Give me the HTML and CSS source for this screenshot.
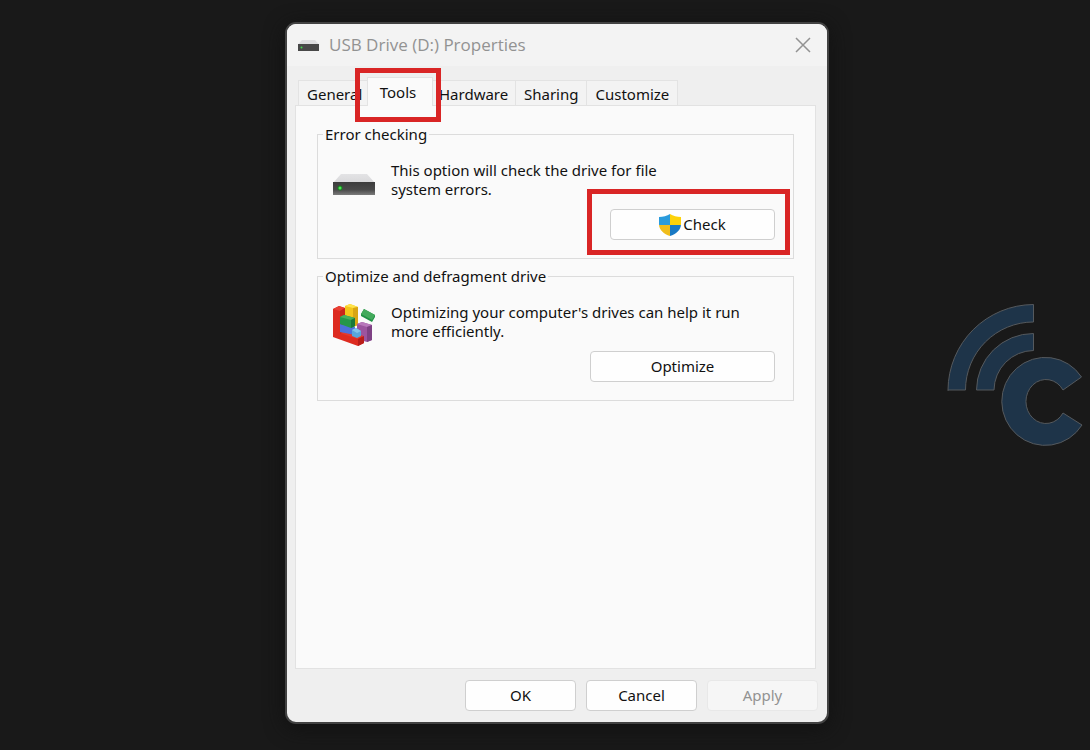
FILE: index.html
```html
<!DOCTYPE html>
<html lang="en">
<head>
    <meta charset="UTF-8">
    <meta name="viewport" content="width=device-width, initial-scale=1.0">
    <title>USB Drive (D:) Properties</title>
    <link rel="stylesheet" href="styles.css">
</head>
<body>
    <svg class="watermark" viewBox="0 0 136 142" aria-hidden="true">
        <path d="M1 86.500V86A86 86 0 0 1 86.500 .5V18A68 68 0 0 0 18.500 86H1Z"/>
        <path d="M29.500 86A57 57 0 0 1 86.500 29.500V46.500A40 40 0 0 0 47 86Z"/>
        <path d="M134.500 73A43.500 44 0 1 0 135 121L116 109A20 22 0 1 1 116 86Z"/>
    </svg>
    <main class="dialog">
        <header class="titlebar">
            <svg class="title-icon" viewBox="0 0 42 22">
                <path d="M8 0H34L42 9H0Z" fill="#dedee0"/>
                <rect y="8" width="42" height="14" fill="#484848"/>
                <circle cx="7" cy="15" r="2" fill="#3fd64a"/>
            </svg>
            <h1>USB Drive (D:) Properties</h1>
            <button class="close" aria-label="Close">
                <svg viewBox="0 0 16 16"><path d="M1 1L15 15M15 1L1 15"/></svg>
            </button>
        </header>

        <div class="tabs" role="tablist">
            <button class="tab general" role="tab">General</button>
            <div class="marked-tab">
                <button class="tab active" role="tab" aria-selected="true">Tools</button>
                <div class="highlight highlight-tab"></div>
            </div>
            <button class="tab hardware" role="tab">Hardware</button>
            <button class="tab" role="tab">Sharing</button>
            <button class="tab" role="tab">Customize</button>
        </div>

        <section class="panel" role="tabpanel">
            <fieldset>
                <legend>Error checking</legend>
                <div class="info">
                    <svg class="info-icon" viewBox="0 0 42 42">
                        <defs>
                            <linearGradient id="front" x1="0" y1="0" x2="0" y2="1">
                                <stop offset="0" stop-color="#3c3c3c"/>
                                <stop offset=".6" stop-color="#4a4a4a"/>
                                <stop offset="1" stop-color="#7b7b7b"/>
                            </linearGradient>
                            <linearGradient id="lid" x1="0" y1="0" x2="0" y2="1">
                                <stop offset="0" stop-color="#e3e3e5"/>
                                <stop offset="1" stop-color="#d8d8da"/>
                            </linearGradient>
                        </defs>
                        <path d="M8 12H34L42 21H0Z" fill="url(#lid)"/>
                        <rect y="20" width="42" height="13" fill="url(#front)"/>
                        <circle cx="7" cy="26" r="2.500" fill="#197f22"/>
                        <circle cx="7" cy="26" r="1.500" fill="#4be653"/>
                    </svg>
                    <p>This option will check the drive for file<br>system errors.</p>
                </div>
                <div class="action">
                    <button class="btn check">
                        <svg class="shield" viewBox="0 0 22 22">
                            <defs>
                                <clipPath id="shield"><path d="M11 0C8 2 4 3 0 3V10C0 16 5 20 11 22C17 20 22 16 22 10V3C18 3 14 2 11 0Z"/></clipPath>
                            </defs>
                            <g clip-path="url(#shield)">
                                <rect width="11" height="11" fill="#2a9bdc"/>
                                <rect x="11" width="11" height="11" fill="#fdd20a"/>
                                <rect y="11" width="11" height="11" fill="#f0bd1b"/>
                                <rect x="11" y="11" width="11" height="11" fill="#1979c4"/>
                            </g>
                        </svg>
                        Check
                    </button>
                    <div class="highlight highlight-check"></div>
                </div>
            </fieldset>

            <fieldset>
                <legend>Optimize and defragment drive</legend>
                <div class="info">
                    <svg class="info-icon" viewBox="0 0 42 42">
                        <path d="M12 2L17 0L25 3V21L20 23L12 20Z" fill="#f3c51b"/>
                        <path d="M12 2L17 0L25 3L20 4Z" fill="#ffe34a"/>
                        <path d="M20 4L25 3V21L20 23Z" fill="#d8a513"/>
                        <path d="M24 20L29 18L39 21V36L34 38L24 35Z" fill="#9c549f"/>
                        <path d="M24 20L29 18L39 21L34 23Z" fill="#b878bb"/>
                        <path d="M34 23L39 21V36L34 38Z" fill="#7e4184"/>
                        <path d="M0 5L6 2L12 4V28L31 34V39L25 42L0 33Z" fill="#dd2b20"/>
                        <path d="M0 5L6 2L12 4L7 7Z" fill="#e84034"/>
                        <path d="M7 7L12 4V28L7 30Z" fill="#c9241c"/>
                        <path d="M7 29L12 27L31 32L25 35Z" fill="#e23a2d"/>
                        <path d="M25 35L31 32V39L25 42Z" fill="#b91d19"/>
                        <path d="M7 20L22 23V31L7 28Z" fill="#4c71db"/>
                        <path d="M7 13L11 11L22 14V22L18 24L7 20Z" fill="#25974a"/>
                        <path d="M7 13L11 11L22 14L18 16Z" fill="#48b05c"/>
                        <path d="M18 16L22 14V22L18 24Z" fill="#197839"/>
                        <path d="M19 26L23 24L28 27V32L24 34L19 32Z" fill="#58a6dc"/>
                        <path d="M19 26L23 24L28 27L24 29Z" fill="#82c3ec"/>
                        <path d="M28 10L31 5L42 11V13L39 18L28 12Z" fill="#219246"/>
                        <path d="M28 10L31 5L42 11L39 16Z" fill="#43aa5c"/>
                    </svg>
                    <p>Optimizing your computer's drives can help it run<br>more efficiently.</p>
                </div>
                <div class="action">
                    <button class="btn optimize">Optimize</button>
                </div>
            </fieldset>
        </section>

        <footer class="footer">
            <button class="btn">OK</button>
            <button class="btn">Cancel</button>
            <button class="btn" disabled>Apply</button>
        </footer>
    </main>
</body>
</html>
```
FILE: styles.css
```css
* {
    box-sizing: border-box;
}
body {
    display: flex;
    justify-content: center;
    min-height: 100vh;
    margin: 0;
    padding: 22px 0 26px 24px;
    background: #191919;
    color: #111;
    font-family: "Noto Sans", "Open Sans", sans-serif;
    font-size: 15px;
    line-height: 19px;
}
button {
    font: inherit;
    color: inherit;
}
.watermark {
    position: absolute;
    top: 304px;
    right: 7px;
    width: 136px;
    fill: #1e3449;
    stroke: #55595d;
    stroke-width: 1;
}
.dialog {
    display: flex;
    flex-direction: column;
    width: 100%;
    max-width: 544px;
    border: 2px solid #424242;
    border-radius: 11px;
    background: #efefef;
    box-shadow: 0 4px 20px #111;
}
.titlebar {
    display: flex;
    align-items: center;
    height: 42px;
    padding: 0 13px 0 11px;
    border-radius: 9px 9px 0 0;
    background: #f3f3f3;
}
.title-icon {
    width: 21px;
    height: 11px;
}
h1 {
    flex: 1;
    margin: 0 0 0 10px;
    color: #929292;
    font-family: "Open Sans", sans-serif;
    font-size: 17px;
    font-weight: 400;
    line-height: 20px;
}
.close {
    display: flex;
    padding: 3px;
    border: 0;
    background: none;
}
.close svg {
    width: 16px;
    height: 16px;
    stroke: #929292;
    stroke-width: 1.5;
}

/* Tabs */
.tabs {
    display: flex;
    align-items: flex-end;
    height: 39px;
    margin-left: 11px;
}
.tab {
    display: block;
    height: 25px;
    padding: 3px 8px 0;
    border: 1px solid #e3e3e3;
    border-width: 1px 1px 0 0;
    background: #f3f3f3;
}
.tab.general {
    width: 69px;
    border-left-width: 1px;
    border-right-width: 0;
}
.tab.hardware {
    width: 83px;
    padding-left: 6px;
}
.marked-tab {
    position: relative;
}
.tab.active {
    width: 66px;
    height: 29px;
    margin-bottom: -1px;
    padding: 0 4px 0 0;
    border-left-width: 1px;
    background: #fafafa;
    position: relative;
}
.highlight {
    position: absolute;
    border: 5px solid #d92525;
    pointer-events: none;
}
.highlight-tab {
    inset: -9px -8px -17px -12px;
    z-index: 1;
}
.highlight-check {
    inset: -20px -15px -15px -23px;
}

.panel {
    flex: 1;
    margin: 0 11px 0 8px;
    padding: 18px 21px;
    border: 1px solid #e2e2e2;
    background: #fafafa;
}
fieldset {
    min-width: 0;
    margin: 0 0 7px;
    padding: 17px 18px 18px 15px;
    border: 1px solid #dcdcdc;
}
legend {
    margin-left: -10px;
    padding: 0 2px;
    line-height: 20px;
}
.info {
    display: flex;
    gap: 16px;
}
.info-icon {
    flex: none;
    width: 42px;
    height: 42px;
    margin-top: 1px;
}
.info p {
    margin: 0;
}
.action {
    position: relative;
    width: fit-content;
    margin: 5px 0 0 auto;
}
.btn {
    display: flex;
    align-items: center;
    justify-content: center;
    width: 111px;
    height: 31px;
    padding: 0;
    border: 1px solid #cfcfcf;
    border-radius: 4px;
    background: #fefefe;
}
.btn:disabled {
    border-color: #e8e8e8;
    background: #f6f6f6;
    color: #929292;
}
.check {
    gap: 2px;
    width: 165px;
}
.optimize {
    width: 185px;
}
.shield {
    width: 22px;
    height: 22px;
}
.footer {
    display: flex;
    justify-content: flex-end;
    gap: 10px;
    padding: 11px 9px 11px;
}
```
